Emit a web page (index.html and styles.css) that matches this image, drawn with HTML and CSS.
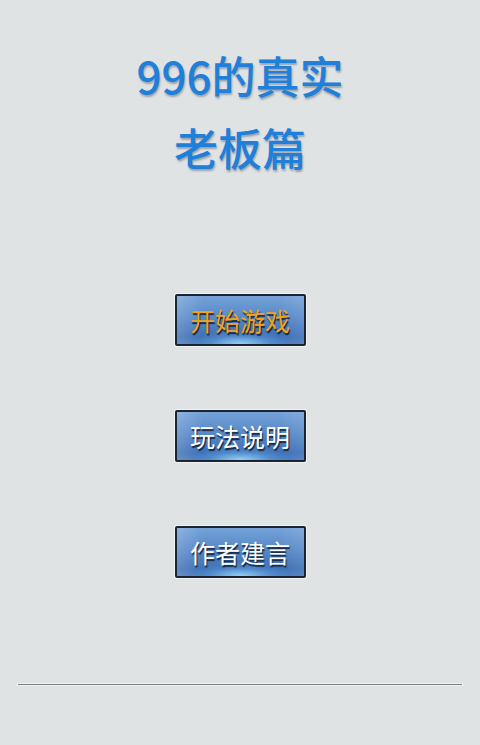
FILE: index.html
```html
<!DOCTYPE html>
<html lang="zh">
<head>
<meta charset="utf-8">
<title>996的真实 老板篇</title>
<link rel="stylesheet" href="styles.css">
</head>
<body>
<div class="page">
  <header class="title">
    <div class="title-line">996的真实</div>
    <div class="title-line">老板篇</div>
  </header>
  <nav class="menu">
    <div class="btn btn-start">开始游戏</div>
    <div class="btn">玩法说明</div>
    <div class="btn">作者建言</div>
  </nav>
  <div class="divider"></div>
</div>
</body>
</html>
```

FILE: styles.css
```css
html, body {
  margin: 0;
  padding: 0;
}
body {
  background: #e0e3e4;
  width: 480px;
  height: 745px;
  overflow: hidden;
  font-family: "Noto Sans CJK SC", "Noto Sans", sans-serif;
}
.page {
  display: flex;
  flex-direction: column;
  align-items: center;
  padding-top: 45px;
}
.title {
  display: flex;
  flex-direction: column;
  align-items: center;
  gap: 12px;
}
.title-line {
  font-size: 44px;
  font-weight: 500;
  line-height: 60px;
  color: #1f7fd9;
  text-shadow: 1px 2px 2px rgba(20, 40, 70, 0.35);
}
.menu {
  margin-top: 117px;
  display: flex;
  flex-direction: column;
  align-items: center;
  gap: 64px;
}
.btn {
  box-sizing: border-box;
  width: 131px;
  height: 52px;
  border: 2px solid #1a2430;
  border-radius: 2px;
  box-shadow: 0 0 0 1px rgba(255, 255, 255, 0.6);
  background:
    radial-gradient(ellipse 40% 28% at 50% 100%, rgba(160, 225, 255, 0.85), rgba(110, 180, 240, 0.35) 60%, rgba(90, 150, 220, 0) 100%),
    linear-gradient(90deg, rgba(255, 255, 255, 0.18), rgba(255, 255, 255, 0) 20%, rgba(255, 255, 255, 0) 80%, rgba(255, 255, 255, 0.1)),
    linear-gradient(180deg, #74a2d8 0%, #5789c8 45%, #3d70b5 85%, #4679bf 100%);
  display: flex;
  align-items: center;
  justify-content: center;
  font-size: 25px;
  font-weight: 400;
  color: #ffffff;
  text-shadow: 1px 2px 1px rgba(10, 20, 40, 0.85);
}
.btn-start {
  color: #f3a31a;
}
.divider {
  margin-top: 106px;
  width: 444px;
  height: 1px;
  background: #7c8288;
  box-shadow: 0 0 1px 1px rgba(255, 255, 255, 0.5);
}
```
